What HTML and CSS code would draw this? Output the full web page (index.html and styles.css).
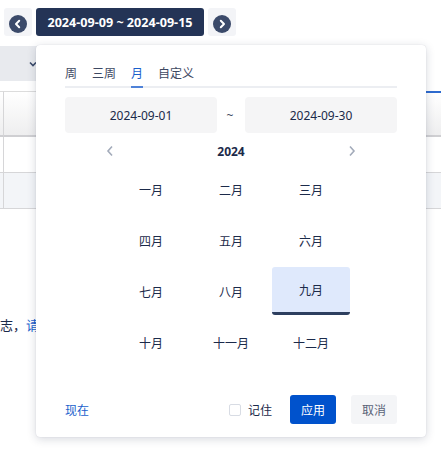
FILE: index.html
```html
<!DOCTYPE html>
<html lang="zh">
<head>
<meta charset="utf-8">
<link rel="stylesheet" href="styles.css">
</head>
<body>
<div class="page">
  <div class="toolbar">
    <button class="nav-btn" aria-label="prev">
      <svg width="18" height="18" viewBox="0 0 18 18"><circle cx="9" cy="9" r="9" fill="#3b4a6a"/><polyline points="10.2,5.8 7,9 10.2,12.2" fill="none" stroke="#fff" stroke-width="2" stroke-linecap="round" stroke-linejoin="round"/></svg>
    </button>
    <button class="range-btn">2024-09-09 ~ 2024-09-15</button>
    <button class="nav-btn" aria-label="next">
      <svg width="18" height="18" viewBox="0 0 18 18"><circle cx="9" cy="9" r="9" fill="#3b4a6a"/><polyline points="7.8,5.8 11,9 7.8,12.2" fill="none" stroke="#fff" stroke-width="2" stroke-linecap="round" stroke-linejoin="round"/></svg>
    </button>
  </div>
  <div class="filter">
    <div class="select">
      <svg class="select-arrow" width="8" height="6" viewBox="0 0 8 6"><polyline points="1,1.5 4,4.5 7,1.5" fill="none" stroke="#3b4a6a" stroke-width="1.6"/></svg>
    </div>
  </div>
  <div class="table">
    <div class="thead">
      <div class="th first"></div>
      <div class="th mid"></div>
      <div class="th last"></div>
    </div>
    <div class="tr">
      <div class="td first"></div>
      <div class="td mid"></div>
      <div class="td last"></div>
    </div>
    <div class="tr alt">
      <div class="td first"></div>
      <div class="td mid"></div>
      <div class="td last"></div>
    </div>
  </div>
  <p class="note">志，<span class="link">请</span>查看</p>

  <div class="popup">
    <div class="tabs">
      <span class="tab">周</span>
      <span class="tab">三周</span>
      <span class="tab active">月</span>
      <span class="tab">自定义</span>
    </div>
    <div class="range">
      <div class="date-input">2024-09-01</div>
      <span class="tilde">~</span>
      <div class="date-input">2024-09-30</div>
    </div>
    <div class="year-row">
      <svg class="chev" width="8" height="12" viewBox="0 0 8 12"><polyline points="6,1.5 2,6 6,10.5" fill="none" stroke="#a3abba" stroke-width="1.6"/></svg>
      <span class="year">2024</span>
      <svg class="chev" width="8" height="12" viewBox="0 0 8 12"><polyline points="2,1.5 6,6 2,10.5" fill="none" stroke="#a3abba" stroke-width="1.6"/></svg>
    </div>
    <div class="months">
      <div class="month">一月</div>
      <div class="month">二月</div>
      <div class="month">三月</div>
      <div class="month">四月</div>
      <div class="month">五月</div>
      <div class="month">六月</div>
      <div class="month">七月</div>
      <div class="month">八月</div>
      <div class="month active">九月</div>
      <div class="month">十月</div>
      <div class="month">十一月</div>
      <div class="month">十二月</div>
    </div>
    <div class="footer">
      <span class="now">现在</span>
      <label class="remember"><span class="checkbox"></span>记住</label>
      <button class="btn primary">应用</button>
      <button class="btn secondary">取消</button>
    </div>
  </div>
</div>
</body>
</html>
```

FILE: styles.css
```css
* { box-sizing: border-box; }
html, body { margin: 0; padding: 0; background: #fff; }
body {
  font-family: "Noto Sans", "Noto Sans CJK SC", sans-serif;
  font-size: 12px;
  color: #1b2a4a;
  width: 441px;
  height: 449px;
  overflow: hidden;
}
.page { position: relative; width: 441px; height: 449px; }

.toolbar {
  display: flex;
  gap: 4px;
  padding: 8px 4px 0;
  height: 36px;
}
.nav-btn {
  width: 28px;
  height: 28px;
  border: 0;
  padding: 0;
  margin: 0;
  background: #f3f4f7;
  border-radius: 3px;
  display: flex;
  align-items: center;
  justify-content: center;
}
.nav-btn svg { margin-top: 4px; }
.range-btn {
  width: 168px;
  height: 28px;
  border: 0;
  margin: 0;
  padding: 0;
  background: #243456;
  color: #fff;
  border-radius: 3px;
  font-family: "Noto Sans", sans-serif;
  font-weight: 700;
  font-size: 12.6px;
  letter-spacing: 0;
}

.filter { margin-top: 10px; height: 35px; }
.select {
  width: 60px;
  height: 35px;
  background: #e8eaee;
  position: relative;
}
.select-arrow { position: absolute; left: 29px; top: 15px; }

.table { margin-top: 10px; }
.thead, .tr { display: flex; }
.thead { height: 46px; }
.th {
  background: linear-gradient(#ffffff, #eeeeef);
  border-top: 1px solid #dcdcdc;
  border-bottom: 2px solid #cfcfd2;
}
.th.last { border-top: 2px solid #2e6bcf; }
.tr { height: 36px; border-bottom: 1px solid #d6d6d8; }
.tr.alt { background: #f3f5f8; }
.first { width: 4px; border-right: 1px solid #d6d6d8; }
.mid { flex: 1; }
.last { width: 15px; }
.td { height: 100%; }

.note {
  margin: 107px 0 0;
  font-family: "Noto Sans CJK SC", sans-serif;
  font-size: 13px;
  line-height: 18px;
  color: #1b2a4a;
}
.link { color: #1a5fcc; }

.popup {
  position: absolute;
  left: 36px;
  top: 45px;
  width: 390px;
  height: 392px;
  background: #fff;
  border-radius: 4px;
  box-shadow: 0 2px 10px rgba(30, 40, 70, 0.18), 0 0 1px rgba(30, 40, 70, 0.2);
  padding: 18px 29px 13px;
  display: flex;
  flex-direction: column;
  font-family: "Noto Sans", "Noto Sans CJK SC", sans-serif;
}
.tabs {
  display: flex;
  gap: 15px;
  border-bottom: 2px solid #eceef2;
  height: 25px;
}
.tab {
  font-family: "Noto Sans CJK SC", sans-serif;
  font-size: 12px;
  line-height: 20px;
  color: #3d4862;
  height: 25px;
  margin-bottom: -2px;
}
.tab.active {
  color: #1a5fcc;
  border-bottom: 2px solid #4f82d8;
}

.range {
  display: flex;
  align-items: center;
  margin-top: 9px;
  height: 36px;
}
.date-input {
  width: 152px;
  height: 36px;
  background: #f5f5f6;
  border-radius: 4px;
  display: flex;
  align-items: center;
  justify-content: center;
  font-size: 12px;
  color: #1b2a4a;
}
.tilde { flex: 1; text-align: center; color: #3d4862; padding-right: 2px; }

.year-row {
  display: flex;
  align-items: center;
  justify-content: space-between;
  margin-top: 8px;
  height: 20px;
  padding: 0 41px;
}
.year { font-weight: 700; font-size: 12px; color: #1b2a4a; }

.months {
  display: grid;
  grid-template-columns: repeat(3, 78px);
  grid-auto-rows: 48px;
  column-gap: 2px;
  row-gap: 3px;
  justify-content: center;
  margin-top: 4px;
}
.month {
  display: flex;
  align-items: center;
  justify-content: center;
  font-family: "Noto Sans CJK SC", sans-serif;
  font-size: 12px;
  color: #1b2a4a;
  border-radius: 3px;
}
.month.active {
  background: #dfe9fc;
  border-bottom: 3px solid #2d3f5f;
}

.footer {
  margin-top: auto;
  display: flex;
  align-items: center;
  height: 29px;
  font-family: "Noto Sans CJK SC", sans-serif;
  font-size: 12px;
}
.now { color: #1a5fcc; flex: 1; }
.remember {
  display: flex;
  align-items: center;
  gap: 7px;
  color: #1b2a4a;
  margin-right: 18px;
}
.checkbox {
  width: 12px;
  height: 12px;
  border: 1px solid #d8dce4;
  border-radius: 2px;
  background: #fff;
}
.btn {
  width: 46px;
  height: 29px;
  border: 0;
  margin: 0;
  padding: 0;
  border-radius: 3px;
  font-family: "Noto Sans CJK SC", sans-serif;
  font-size: 12px;
}
.primary { background: #0052cc; color: #fff; margin-right: 15px; }
.secondary { background: #f4f5f7; color: #5a6377; }
```
